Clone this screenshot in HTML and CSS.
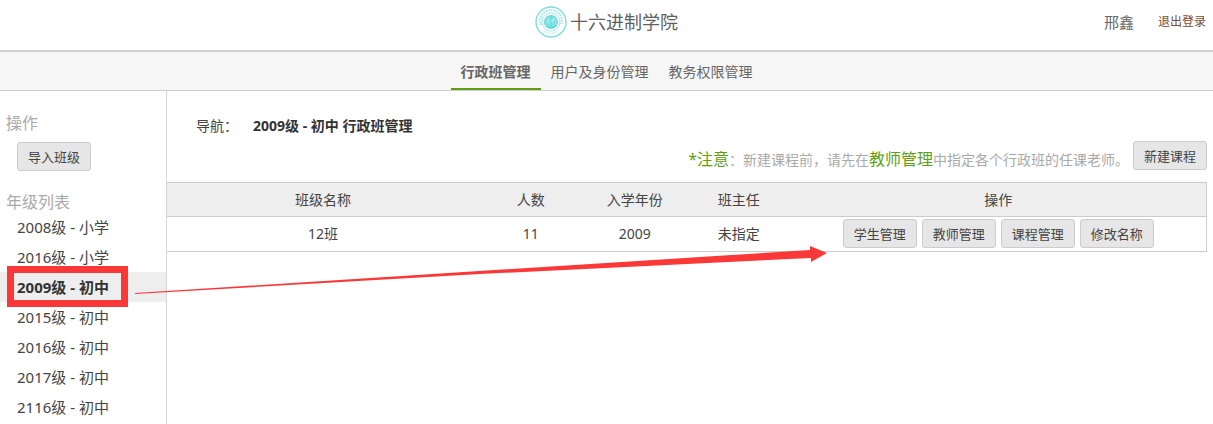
FILE: index.html
```
<!DOCTYPE html>
<html lang="zh-CN">

<head>
    <meta charset="UTF-8">
    <meta name="viewport" content="width=device-width, initial-scale=1.0">
    <title>行政班管理</title>
    <link rel="stylesheet" href="styles.css">
</head>

<body>
    <header class="header">
        <div class="brand">
            <svg class="logo" viewBox="0 0 32 32" aria-hidden="true">
                <circle cx="16" cy="16" r="15" fill="#fff" stroke="#7fdcde" stroke-width="1.4"/>
                <path d="M6 19A10.800 10.800 0 1 1 26 19" fill="none" stroke="#9fe5e6" stroke-width="2" stroke-dasharray="1.600 1"/>
                <path d="M8 24A11.500 11.500 0 0 0 24 24" fill="none" stroke="#c5f0f0" stroke-width="1.500" stroke-dasharray="1 .600"/>
                <circle cx="16" cy="16" r="9" fill="#fff" stroke="#a8e8e9" stroke-width="1"/>
                <circle cx="16" cy="16" r="7" fill="#6adadc"/>
                <path d="M12 12v8M14 11l-1 5M15 13v7M18 11v9M20 12l-2 4M21 14v5M11 15l4 2M16 15l5-2" fill="none" stroke="#b9eff0" stroke-width=".8"/>
            </svg>
            <span class="school">十六进制学院</span>
        </div>
        <div class="user">
            <span class="user-name">邢鑫</span>
            <a class="logout" href="#">退出登录</a>
        </div>
    </header>

    <nav class="tabs">
        <a class="tab active" href="#">行政班管理</a>
        <a class="tab" href="#">用户及身份管理</a>
        <a class="tab" href="#">教务权限管理</a>
    </nav>

    <div class="container">
        <aside class="sidebar">
            <h2 class="side-title">操作</h2>
            <button type="button" class="btn import">导入班级</button>
            <h2 class="side-title">年级列表</h2>
            <ul class="grades">
                <li><a href="#">2008级 - 小学</a></li>
                <li><a href="#">2016级 - 小学</a></li>
                <li class="current"><a href="#">2009级 - 初中</a><span class="mark"></span></li>
                <li><a href="#">2015级 - 初中</a></li>
                <li><a href="#">2016级 - 初中</a></li>
                <li><a href="#">2017级 - 初中</a></li>
                <li><a href="#">2116级 - 初中</a></li>
            </ul>
        </aside>

        <main class="content">
            <div class="crumb">导航：<strong>2009级 - 初中 行政班管理</strong></div>
            <div class="notice">
                <p><em>*注意</em>：新建课程前，请先在<em>教师管理</em>中指定各个行政班的任课老师。</p>
                <button type="button" class="btn">新建课程</button>
            </div>
            <table class="classes">
                <thead>
                    <tr>
                        <th class="col-name">班级名称</th>
                        <th>人数</th>
                        <th>入学年份</th>
                        <th>班主任</th>
                        <th class="col-action">操作</th>
                    </tr>
                </thead>
                <tbody>
                    <tr>
                        <td>12班</td>
                        <td>11</td>
                        <td>2009</td>
                        <td>未指定</td>
                        <td>
                            <div class="actions">
                                <button type="button" class="btn">学生管理</button>
                                <button type="button" class="btn">教师管理</button>
                                <button type="button" class="btn">课程管理</button>
                                <button type="button" class="btn">修改名称</button>
                            </div>
                        </td>
                    </tr>
                </tbody>
            </table>
        </main>

        <!-- arrow from the current grade to the row actions -->
        <svg class="arrow" viewBox="0 0 692 48" aria-hidden="true">
            <path d="M0 47L675 4V0L692 7L676 16V12L345 28L0 48Z" fill="#fb3838"/>
        </svg>
    </div>
</body>

</html>
```

FILE: styles.css
```
* {
    box-sizing: border-box;
}

body {
    margin: 0;
    font-family: "Noto Sans", "Noto Sans CJK SC", sans-serif;
    font-size: 14px;
    line-height: 20px;
    color: #444;
    background-color: #fff;
}

a {
    color: inherit;
    text-decoration: none;
}

/* header */
.header {
    display: grid;
    grid-template-columns: 1fr auto 1fr;
    align-items: center;
    height: 52px;
    padding: 0 7px 7px;
    border-bottom: 2px solid #d0d0d0;
}

.brand {
    grid-column: 2;
    display: flex;
    align-items: center;
    gap: 3px;
}

.logo {
    width: 32px;
    height: 32px;
}

.school {
    font-size: 18px;
    color: #606060;
}

.user {
    display: flex;
    justify-content: flex-end;
    align-items: center;
    gap: 24px;
}

.user-name {
    font-size: 15px;
    color: #666;
}

.logout {
    font-size: 12px;
    color: #7c4a32;
}

/* tabs */
.tabs {
    display: flex;
    justify-content: center;
    height: 39px;
    background-color: #f6f6f6;
    border-bottom: 1px solid #ccc;
}

.tab {
    padding: 10px 10px 6px;
    color: #666;
}

.tab.active {
    font-weight: bold;
    border-bottom: 2px solid #60a010;
}

.container {
    display: flex;
    position: relative;
}

/* sidebar */
.sidebar {
    width: 167px;
    min-height: calc(100vh - 91px);
    padding-top: 22px;
    border-right: 1px solid #d5d5d5;
}

.side-title {
    margin: 0;
    padding-left: 6px;
    font-size: 16px;
    font-weight: normal;
    color: #aaa;
}

.btn {
    height: 29px;
    padding: 0 10px;
    font-family: inherit;
    font-size: 13px;
    color: #444;
    background-color: #e6e6e6;
    border: 1px solid #ccc;
    border-radius: 3px;
}

.import {
    display: block;
    margin: 9px 0 21px 17px;
}

.grades {
    margin: 0;
    padding: 0;
    list-style-type: none;
    font-size: 15px;
    line-height: 30px;
}

.grades li {
    position: relative;
    padding-left: 17px;
}

.grades .current {
    font-weight: bold;
    color: #333;
    background-color: #eee;
}

.mark {
    position: absolute;
    top: -6px;
    left: 7px;
    width: 121px;
    height: 41px;
    border: 7px solid #fb3838;
}

/* content */
.content {
    flex: 1;
    padding: 25px 6px 0 0;
}

.crumb {
    padding-left: 29px;
}

.crumb strong {
    margin-left: 15px;
    color: #333;
}

.notice {
    display: flex;
    justify-content: flex-end;
    gap: 4px;
    margin: 5px 0 12px;
}

.notice p {
    margin: 8px 0 0;
    color: #aaa;
}

.notice em {
    font-size: 16px;
    font-style: normal;
    color: #60a010;
}

.classes {
    width: 100%;
    table-layout: fixed;
    border-collapse: collapse;
    border: 1px solid #ccc;
    border-left: none;
}

.classes th,
.classes td {
    width: 10%;
    height: 34px;
    padding: 0;
    font-weight: normal;
    text-align: center;
    border-bottom: 1px solid #ccc;
}

.classes td {
    height: 35px;
}

.classes th {
    background-color: #eee;
}

.classes .col-name {
    width: 30%;
}

.classes .col-action {
    width: 40%;
}

.actions {
    display: flex;
    justify-content: center;
    gap: 5px;
    padding-bottom: 2px;
}

.arrow {
    position: absolute;
    top: 155px;
    left: 135px;
    width: 692px;
    height: 48px;
}
```
